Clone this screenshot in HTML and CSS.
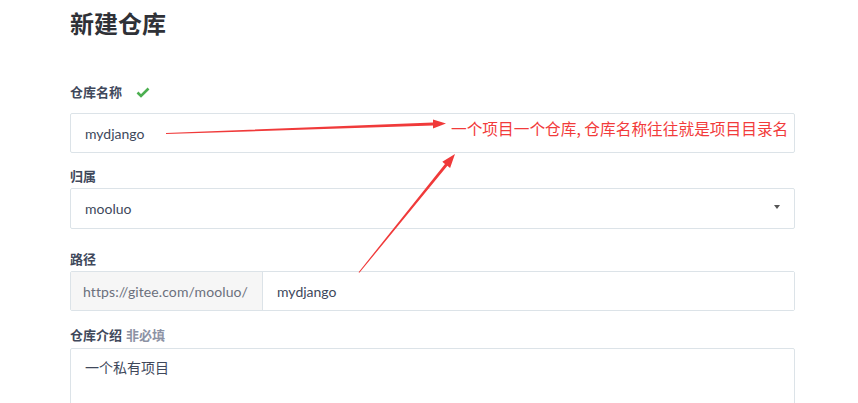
FILE: index.html
```html
<!DOCTYPE html>
<html lang="zh-CN">
<head>
    <meta charset="UTF-8">
    <meta name="viewport" content="width=device-width, initial-scale=1.0">
    <title>新建仓库</title>
    <link rel="stylesheet" href="styles.css">
</head>
<body>
    <div class="page">
        <h1>新建仓库</h1>

        <form class="repo-form">
            <div class="field field-name">
                <label>仓库名称
                    <svg class="check" width="14" height="11" viewBox="0 0 14 11">
                        <path d="M1.5 5.5 L5 9 L12.5 1.5" fill="none" stroke="#4caf50" stroke-width="2.6"/>
                    </svg>
                </label>
                <input class="text-input" type="text" value="mydjango">
            </div>

            <div class="field field-owner">
                <label>归属</label>
                <div class="select-box">
                    <select>
                        <option>mooluo</option>
                    </select>
                    <i class="caret"></i>
                </div>
            </div>

            <div class="field">
                <label>路径</label>
                <div class="input-group">
                    <span class="addon">https://gitee.com/mooluo/</span>
                    <input type="text" value="mydjango">
                </div>
            </div>

            <div class="field field-desc">
                <label>仓库介绍 <span class="optional">非必填</span></label>
                <textarea>一个私有项目</textarea>
            </div>
        </form>

        <!-- annotation drawn over the screenshot -->
        <div class="note">一个项目一个仓库, 仓库名称往往就是项目目录名</div>
        <svg class="arrows" width="858" height="403" viewBox="0 0 858 403">
            <polygon fill="#f03a3a" points="166,133 433,122.5 433,119.5 446,123.5 433,128.5 433,125.5 166,134"/>
            <polygon fill="#f03a3a" points="358.6,272.2 445,163.9 442.3,161.7 455,154 450.1,168 447.4,165.8 359.4,272.8"/>
        </svg>
    </div>
</body>
</html>
```

FILE: styles.css
```css
body {
    margin: 0;
    background: #fff;
    font-family: Lato, "Noto Sans CJK SC", sans-serif;
    color: #40485b;
}

.page {
    position: relative;
    width: 725px;
    padding: 8px 0 0 70px;
    height: 395px;
    overflow: hidden;
}

h1 {
    margin: 0;
    font-size: 24px;
    line-height: 32px;
    font-weight: bold;
    color: #2f3137;
}

.repo-form {
    margin-top: 42px;
}

.field {
    margin-bottom: 13px;
}

.field-owner {
    margin-bottom: 20px;
}

label {
    display: flex;
    align-items: center;
    gap: 4px;
    font-size: 13px;
    line-height: 20px;
    font-weight: bold;
    margin-bottom: 2px;
}

.field-name label {
    margin-bottom: 11px;
}

.field-desc {
    padding-top: 1px;
}

.field-desc label {
    margin-bottom: 3px;
}

.check {
    margin-left: 10px;
}

.optional {
    color: #8c92a4;
}

.text-input,
.select-box,
.input-group,
textarea {
    box-sizing: border-box;
    width: 725px;
    border: 1px solid #dce3e8;
    border-radius: 2px;
    background: #fff;
}

input,
select,
textarea {
    font-family: Lato, "Noto Sans CJK SC", sans-serif;
    font-size: 14px;
    color: #40485b;
    outline: none;
}

.text-input {
    display: block;
    height: 40px;
    padding: 0 14px;
}

.select-box {
    position: relative;
    height: 41px;
}

.select-box select {
    appearance: none;
    width: 100%;
    height: 100%;
    border: none;
    background: transparent;
    padding: 0 14px;
}

.caret {
    position: absolute;
    right: 14px;
    top: 16px;
    border-left: 3.5px solid transparent;
    border-right: 3.5px solid transparent;
    border-top: 4px solid #555;
}

.input-group {
    display: flex;
    height: 40px;
}

.addon {
    display: flex;
    align-items: center;
    padding: 0 14px 0 12px;
    background: #f6f6f6;
    border-right: 1px solid #dce3e8;
    color: #6b707c;
    font-size: 14px;
    letter-spacing: 0.1px;
}

.input-group input {
    flex: 1;
    border: none;
    padding: 0 14px;
}

textarea {
    display: block;
    height: 90px;
    padding: 9px 14px;
    line-height: 20px;
    resize: none;
}

.note {
    position: absolute;
    left: 451px;
    top: 119px;
    font-family: "Noto Sans CJK SC", sans-serif;
    font-size: 15.7px;
    line-height: 20px;
    color: #f23b3b;
    white-space: nowrap;
}

.arrows {
    position: absolute;
    left: 0;
    top: 0;
    pointer-events: none;
}
```
